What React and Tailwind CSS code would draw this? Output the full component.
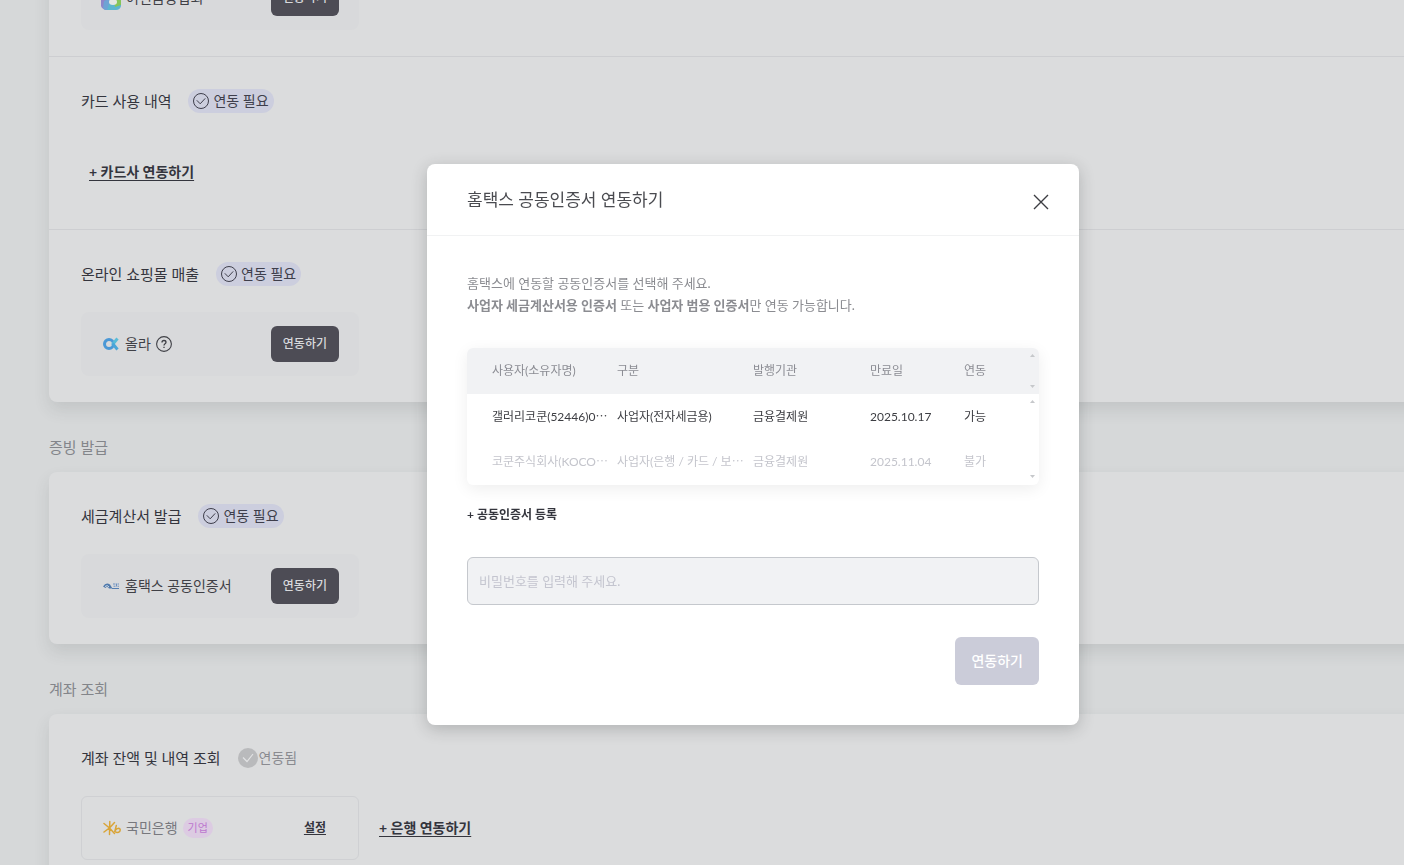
import React from "react";

const certificates = [
    { id: 1, owner: "갤러리코쿤(52446)0", ownerCut: true, type: "사업자(전자세금용)", issuer: "금융결제원", expires: "2025.10.17", status: "가능", active: true },
    { id: 2, owner: "코쿤주식회사(KOCO", ownerCut: true, type: "사업자(은행 / 카드 / 보", typeCut: true, issuer: "금융결제원", expires: "2025.11.04", status: "불가", active: false },
];

const CardFinanceLogo = () => (
    <svg className="-ml-px h-6 w-5 shrink-0" viewBox="0 0 20 24" aria-hidden="true">
        <path d="M0 6 L10 0 L20 6 V15 L10 12 Z" fill="#d9c653" />
        <path d="M0 6 L10 11 V24 H5 Q1 23 0 20 Z" fill="#8f86c9" />
        <path d="M3 15 L10 12 L12 24 H5 Q3 24 2 22 Z" fill="#6fa3d4" />
        <path d="M8 18 L20 11 V20 Q19 24 15 24 H6 Z" fill="#5cb6cf" />
        <path d="M13 14 L20 10 V19 L14 21 Z" fill="#86c559" />
        <ellipse cx="12" cy="16" rx="4" ry="3" fill="#e4e7e2" />
    </svg>
);

const AllaLogo = () => (
    <svg className="mx-px h-4 w-4 shrink-0" viewBox="0 0 16 16" fill="none" aria-hidden="true">
        <circle cx="6" cy="8" r="4.5" stroke="#4a98d6" strokeWidth="3" />
        <path d="M9.5 8.5 L14.5 2.5" stroke="#58bcd8" strokeWidth="3" />
        <path d="M9.5 7.5 L14.5 13.5" stroke="#4ba6d8" strokeWidth="3" />
    </svg>
);

const HometaxLogo = () => (
    <svg className="mx-px h-4 w-4 shrink-0" viewBox="0 0 16 16" fill="none" aria-hidden="true">
        <path d="M0 8.5 Q3 3.5 7 6.5 L9.5 10.5 H6 Q4 8 2.5 10 Z" fill="#4f79ac" />
        <path d="M2 8.5 Q4.5 6.5 6 9" stroke="#d3dde6" />
        <path d="M10 6 H12.5 M13.5 5.5 V8.5 M10.5 8.2 H12.5 M14.5 6 H16 M14.5 8.2 H16" stroke="#6c90c0" />
        <path d="M9 10.5 H16" stroke="#567fb2" />
    </svg>
);

const KbLogo = () => (
    <svg className="h-[18px] w-[18px] shrink-0" viewBox="0 0 18 18" fill="none" stroke="#d9a437" strokeWidth="1.5" strokeLinecap="round" aria-hidden="true">
        <path d="M6.8 2.5 L6.5 15.5 M1 4.5 L6.5 9 L11.5 3.5 M1 13 L6.5 9 L11.5 14.5" />
        <path d="M13.3 6.5 L11.8 12.5 Q14.5 14.5 16.7 12.5 Q18 9.5 15.7 9.3 Q13.5 9.3 12.3 11.5" />
    </svg>
);

const CheckIcon = () => (
    <svg className="h-4 w-4 shrink-0" viewBox="0 0 16 16" fill="none" stroke="currentColor" aria-hidden="true">
        <circle cx="8" cy="8" r="7.5" />
        <path d="M3.8 7.3 L7.2 10.8 L12.2 5.4" />
    </svg>
);

const QuestionIcon = () => (
    <svg className="h-4 w-4" viewBox="0 0 16 16" fill="none" stroke="currentColor" aria-hidden="true">
        <circle cx="8" cy="8" r="7.4" strokeWidth="1.1" />
        <path d="M6 6.5 Q6 4.5 8 4.5 Q10 4.5 10 6.3 Q10 7.3 8.8 8 Q8 8.5 8 9.6" strokeWidth="1.3" />
        <path d="M8 10.8 V12.1" strokeWidth="1.3" />
    </svg>
);

const ScrollArrows = () => (
    <span className="absolute inset-y-0 right-1 flex flex-col justify-between py-[6px]" aria-hidden="true">
        <svg className="h-[3px] w-[5px]" viewBox="0 0 5 3"><path d="M0 3 L2.5 0 L5 3 Z" fill="#c6c8cb" /></svg>
        <svg className="h-[3px] w-[5px]" viewBox="0 0 5 3"><path d="M0 0 L2.5 3 L5 0 Z" fill="#c6c8cb" /></svg>
    </span>
);

const Cut = () => <span className="font-['Noto_Sans_CJK_KR']">…</span>;

const NeedBadge = () => (
    <span className="flex h-6 items-center gap-1 rounded-full bg-[#cccede] px-[5px] text-sm text-[#3e3e4b]">
        <CheckIcon />
        연동 필요
    </span>
);

const DoneBadge = () => (
    <span className="flex h-6 items-center gap-px text-sm text-[#8a8b90]">
        <svg className="h-5 w-5" viewBox="0 0 20 20" fill="none" aria-hidden="true">
            <circle cx="10" cy="10" r="10" fill="#b9babc" />
            <path d="M5 9.5 L9 13.5 L15 6" stroke="#e2e3e4" strokeWidth="1.2" />
        </svg>
        연동됨
    </span>
);

const GroupTitle = ({ children }) => (
    <h2 className="pb-[13px] pt-[33px] text-[15px] leading-6 text-[#83858a]">{children}</h2>
);

const Card = ({ children }) => (
    <div className="divide-y divide-[#cdced1] rounded-lg bg-[#dbdcdd] shadow-[0_8px_16px_rgba(60,64,67,0.12)]">
        {children}
    </div>
);

const Section = ({ title, badge, children }) => (
    <section className="px-8 pb-[26px] pt-8">
        <div className="mb-[26px] flex h-6 items-center gap-[17px]">
            <h3 className="text-[15px] leading-6 text-[#34353d]">{title}</h3>
            {badge}
        </div>
        <div className="flex h-16 items-center gap-5">{children}</div>
    </section>
);

const ServiceBox = ({ logo, name }) => (
    <div className="flex h-16 w-[278px] items-center justify-between rounded-lg bg-[#d8d9db] pl-[21px] pr-5">
        <div className="flex items-center gap-[5px] text-sm text-[#3f4046]">
            {logo}
            {name}
        </div>
        <button type="button" className="h-9 rounded-md bg-[#4d4c55] px-3 text-xs font-medium text-[#d8d9dc]">연동하기</button>
    </div>
);

const AddLink = ({ children }) => (
    <a href="#" className="text-sm font-bold text-[#34353d] underline underline-offset-3">{children}</a>
);

const CertificateModal = () => (
    <div className="fixed inset-0 flex items-start justify-center pl-[102px] pt-[164px]">
        <div role="dialog" aria-modal="true" aria-labelledby="modal-title" className="w-full max-w-[652px] rounded-lg bg-white shadow-[0_4px_16px_rgba(40,44,48,0.24)]">
            <div className="flex h-[72px] items-center justify-between border-b border-[#f1f2f3] pl-10 pr-[29px]">
                <h1 id="modal-title" className="text-[17px] leading-6 text-[#4a4b50]">홈택스 공동인증서 연동하기</h1>
                <button type="button" aria-label="닫기" className="px-px pt-1 text-[#3c3d42]">
                    <svg className="h-4 w-4" viewBox="0 0 16 16" fill="none" stroke="currentColor" strokeWidth="1.4" aria-hidden="true">
                        <path d="M1 1 L15 15 M15 1 L1 15" />
                    </svg>
                </button>
            </div>
            <div className="px-10 pb-10 pt-9">
                <p className="text-[13px] leading-[22px] text-[#8b8c91]">
                    홈택스에 연동할 공동인증서를 선택해 주세요.
                    <br />
                    <b>사업자 세금계산서용 인증서</b> 또는 <b>사업자 범용 인증서</b>만 연동 가능합니다.
                </p>
                <div className="mt-8 overflow-hidden rounded-md pb-px shadow-[0_4px_16px_rgba(0,0,0,0.07)]">
                    <table className="w-full table-fixed text-left text-xs">
                        <colgroup>
                            <col className="w-[150px]" />
                            <col className="w-[136px]" />
                            <col className="w-[117px]" />
                            <col className="w-[94px]" />
                            <col />
                        </colgroup>
                        <thead className="relative bg-[#f1f2f4] text-[#8b8c93]">
                            <tr className="h-[46px]">
                                <th className="pl-[25px] font-normal">사용자(소유자명)</th>
                                <th className="font-normal">구분</th>
                                <th className="font-normal">발행기관</th>
                                <th className="font-normal">만료일</th>
                                <th className="font-normal">연동<ScrollArrows /></th>
                            </tr>
                        </thead>
                        <tbody className="relative">
                            {
                                certificates.map((item) => (
                                    <tr key={item.id} className={item.active ? "h-[45px] text-[#3c3d42]" : "h-[45px] text-[#c4c5cc]"}>
                                        <td className="whitespace-nowrap pl-[25px]">{item.owner}{item.ownerCut && <Cut />}</td>
                                        <td className="whitespace-nowrap">{item.type}{item.typeCut && <Cut />}</td>
                                        <td>{item.issuer}</td>
                                        <td>{item.expires}</td>
                                        <td>{item.status}{item.id === 1 && <ScrollArrows />}</td>
                                    </tr>
                                ))
                            }
                        </tbody>
                    </table>
                </div>
                <button type="button" className="mt-5 block h-5 text-xs font-bold text-[#34353d]">+ 공동인증서 등록</button>
                <input
                    type="password"
                    disabled
                    aria-label="비밀번호"
                    placeholder="비밀번호를 입력해 주세요."
                    className="mt-8 block h-12 w-full rounded-md border border-[#c5c8cd] bg-[#f1f2f4] px-[11px] text-[13px] placeholder:text-[#c4c5cf]"
                />
                <div className="mt-8 flex justify-end">
                    <button type="button" disabled className="h-12 rounded-md bg-[#cbccd9] px-4 text-sm font-medium text-white">연동하기</button>
                </div>
            </div>
        </div>
    </div>
);

const App = () => {
    return (
        <div className="h-screen overflow-hidden bg-[#d6d8d9] font-[Lato,'Noto_Sans_CJK_KR',sans-serif]" lang="ko">
            <main className="-mr-8 -mt-[34px] pl-[49px]">
                <Card>
                    <section className="px-8 pb-[26px]">
                        <ServiceBox logo={<CardFinanceLogo />} name="여신금융협회" />
                    </section>
                    <Section title="카드 사용 내역" badge={<NeedBadge />}>
                        <div className="pl-2">
                            <AddLink>+ 카드사 연동하기</AddLink>
                        </div>
                    </Section>
                    <Section title="온라인 쇼핑몰 매출" badge={<NeedBadge />}>
                        <ServiceBox
                            logo={<AllaLogo />}
                            name={<>올라<button type="button" aria-label="도움말"><QuestionIcon /></button></>}
                        />
                    </Section>
                </Card>
                <GroupTitle>증빙 발급</GroupTitle>
                <Card>
                    <Section title="세금계산서 발급" badge={<NeedBadge />}>
                        <ServiceBox logo={<HometaxLogo />} name="홈택스 공동인증서" />
                    </Section>
                </Card>
                <GroupTitle>계좌 조회</GroupTitle>
                <Card>
                    <Section title="계좌 잔액 및 내역 조회" badge={<DoneBadge />}>
                        <div className="flex h-16 w-[278px] items-center justify-between rounded-md border border-[#cfd0d3] pl-[21px] pr-5">
                            <div className="flex items-center gap-[5px] text-sm text-[#77787d]">
                                <KbLogo />
                                국민은행
                                <span className="rounded-full bg-[#dccbe2] px-[5px] py-[2px] text-[11px] leading-4 text-[#bd77cf]">기업</span>
                            </div>
                            <a href="#" className="mr-3 text-xs font-bold text-[#34353d] underline underline-offset-2">설정</a>
                        </div>
                        <AddLink>+ 은행 연동하기</AddLink>
                    </Section>
                </Card>
            </main>
            <CertificateModal />
        </div>
    )
}
export default App
